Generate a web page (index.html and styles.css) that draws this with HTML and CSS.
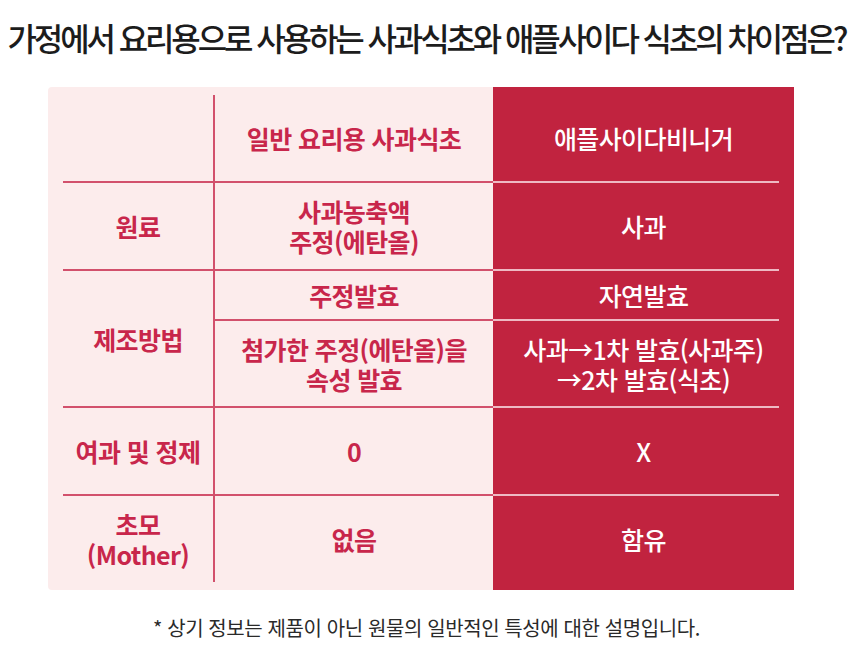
FILE: index.html
```html
<!DOCTYPE html>
<html lang="ko">
<head>
<meta charset="utf-8">
<link rel="stylesheet" href="styles.css">
</head>
<body>
<h1 class="title">가정에서 요리용으로 사용하는 사과식초와 애플사이다 식초의 차이점은?</h1>
<div class="table">
  <div class="left">
    <div class="lab lab-head"></div>
    <div class="val val-head">일반 요리용 사과식초</div>
    <div class="lab">원료</div>
    <div class="val">사과농축액<br>주정(에탄올)</div>
    <div class="lab lab-span">제조방법</div>
    <div class="val">주정발효</div>
    <div class="val">첨가한 주정(에탄올)을<br>속성 발효</div>
    <div class="lab">여과 및 정제</div>
    <div class="val">0</div>
    <div class="lab last">초모<br>(Mother)</div>
    <div class="val last">없음</div>
  </div>
  <div class="right">
    <div class="rc">애플사이다비니거</div>
    <div class="rc">사과</div>
    <div class="rc">자연발효</div>
    <div class="rc">사과→1차 발효(사과주)<br>→2차 발효(식초)</div>
    <div class="rc">X</div>
    <div class="rc last">함유</div>
  </div>
</div>
<p class="note">* 상기 정보는 제품이 아닌 원물의 일반적인 특성에 대한 설명입니다.</p>
</body>
</html>
```

FILE: styles.css
```css
* { box-sizing: border-box; }
body {
  margin: 0;
  background: #ffffff;
  font-family: "Noto Sans CJK KR", "Noto Sans", sans-serif;
}
.title {
  margin: 17px 0 0;
  height: 40px;
  line-height: 40px;
  font-size: 32px;
  font-weight: 500;
  letter-spacing: -3.1px;
  color: #1c1c1c;
  text-align: center;
  white-space: nowrap;
}
.table {
  display: flex;
  margin: 30px 0 0 48px;
  width: 746px;
  height: 503px;
}
.left {
  width: 445px;
  background: #fcecec;
  border-radius: 4px 0 0 4px;
  padding: 8px 0;
  display: grid;
  grid-template-columns: 165px 280px;
  grid-template-rows: 88px 88px 50px 87px 88px 86px;
}
.lab, .val {
  display: flex;
  align-items: center;
  justify-content: center;
  text-align: center;
  color: #c8264b;
  font-weight: 700;
  font-size: 25px;
  letter-spacing: -0.6px;
  line-height: 30px;
  border-bottom: 2px solid #d2506c;
}
.lab { margin-left: 15px; }
.lab-span { grid-row: span 2; }
.val { border-left: 2px solid #d2506c; }
.right {
  width: 301px;
  background: #c1233f;
  padding: 8px 0;
  display: grid;
  grid-template-rows: 88px 88px 50px 87px 88px 86px;
}
.rc {
  display: flex;
  align-items: center;
  justify-content: center;
  text-align: center;
  color: #ffffff;
  font-weight: 500;
  font-size: 25px;
  letter-spacing: -0.6px;
  line-height: 30px;
  margin-right: 15px;
  padding-left: 15px;
  border-bottom: 2px solid #eeb9c3;
}
.lab.last, .val.last, .rc.last { border-bottom: none; }
.note {
  margin: 24px 0 0;
  line-height: 28px;
  text-align: center;
  font-size: 20px;
  letter-spacing: -0.4px;
  color: #2a2a2a;
}
```
